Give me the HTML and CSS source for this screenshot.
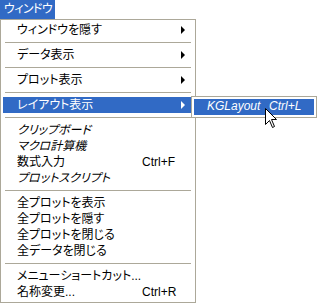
FILE: index.html
```html
<!DOCTYPE html>
<html lang="ja">
<head>
  <meta charset="UTF-8">
  <title>ウィンドウ</title>
  <link rel="stylesheet" href="styles.css">
</head>
<body>
  <div class="menubar">
    <span class="menu-title">ウィンドウ</span>
  </div>

  <div class="menu">
    <div class="item"><span>ウィンドウを隠す</span><span></span><span class="arrow"></span></div>
    <div class="sep"></div>
    <div class="item"><span>データ表示</span><span></span><span class="arrow"></span></div>
    <div class="sep"></div>
    <div class="item"><span>プロット表示</span><span></span><span class="arrow"></span></div>
    <div class="sep"></div>
    <div class="item active"><span>レイアウト表示</span><span></span><span class="arrow"></span></div>
    <div class="sep"></div>
    <div class="item italic"><span>クリップボード</span></div>
    <div class="item italic"><span>マクロ計算機</span></div>
    <div class="item"><span>数式入力</span><span class="key">Ctrl+F</span></div>
    <div class="item italic"><span>プロットスクリプト</span></div>
    <div class="sep"></div>
    <div class="item"><span>全プロットを表示</span></div>
    <div class="item"><span>全プロットを隠す</span></div>
    <div class="item"><span>全プロットを閉じる</span></div>
    <div class="item"><span>全データを閉じる</span></div>
    <div class="sep"></div>
    <div class="item"><span>メニューショートカット...</span></div>
    <div class="item"><span>名称変更...</span><span class="key">Ctrl+R</span></div>

    <!-- submenu of レイアウト表示 -->
    <div class="submenu">
      <div class="sub-item"><span>KGLayout</span><span>Ctrl+L</span></div>
    </div>
  </div>

  <svg class="cursor" width="13" height="21" viewBox="0 0 13 21">
    <path d="M0.5 0.5 L0.5 16.5 L4.5 12.5 L7.5 19.5 L9.5 18.5 L6.5 11.5 L11.5 11.5 Z" fill="#fff" stroke="#000" stroke-width="1"/>
  </svg>
</body>
</html>
```

FILE: styles.css
```css
* {
  margin: 0;
  padding: 0;
  box-sizing: border-box;
}

body {
  background: #fff;
  color: #000;
  font-family: "Liberation Sans", "Noto Sans CJK JP", sans-serif;
  font-size: 12px;
  font-feature-settings: "palt";
  position: relative;
  width: 317px;
  height: 304px;
  overflow: hidden;
}

.menubar {
  height: 19px;
  display: flex;
}

.menu-title {
  background: #316ac5;
  color: #fff;
  width: 55px;
  height: 19px;
  line-height: 18px;
  padding-left: 4px;
  letter-spacing: -0.6px;
  white-space: nowrap;
  overflow: hidden;
}

/* Dropdown */
.menu {
  position: relative;
  width: 196px;
  border: 1px solid #aca899;
  background: #fff;
  padding: 2px;
}

.item {
  display: grid;
  grid-template-columns: 125px 1fr 12px;
  align-items: center;
  height: 16px;
  padding-left: 14px;
  line-height: 15px;
  white-space: nowrap;
}

.item.italic span {
  font-style: italic;
}

.item.active {
  background: #316ac5;
  color: #fff;
}

.key {
  font-family: "Liberation Sans", sans-serif;
}

.arrow {
  width: 0;
  height: 0;
  border-top: 4px solid transparent;
  border-bottom: 4px solid transparent;
  border-left: 4px solid #000;
  justify-self: start;
}

.item.active .arrow {
  border-left-color: #fff;
}

.sep {
  height: 9px;
  padding: 4px 2px;
}

.sep::after {
  content: "";
  display: block;
  height: 1px;
  background: #aca899;
}

/* Submenu */
.submenu {
  position: absolute;
  left: 190px;
  top: 76px;
  width: 126px;
  border: 1px solid #aca899;
  background: #fff;
  padding: 2px;
}

.sub-item {
  background: #316ac5;
  color: #fff;
  height: 16px;
  line-height: 15px;
  display: grid;
  grid-template-columns: 62px 1fr;
  padding-left: 13px;
  font-style: italic;
  white-space: nowrap;
}

.cursor {
  position: absolute;
  left: 265px;
  top: 108px;
}
```
